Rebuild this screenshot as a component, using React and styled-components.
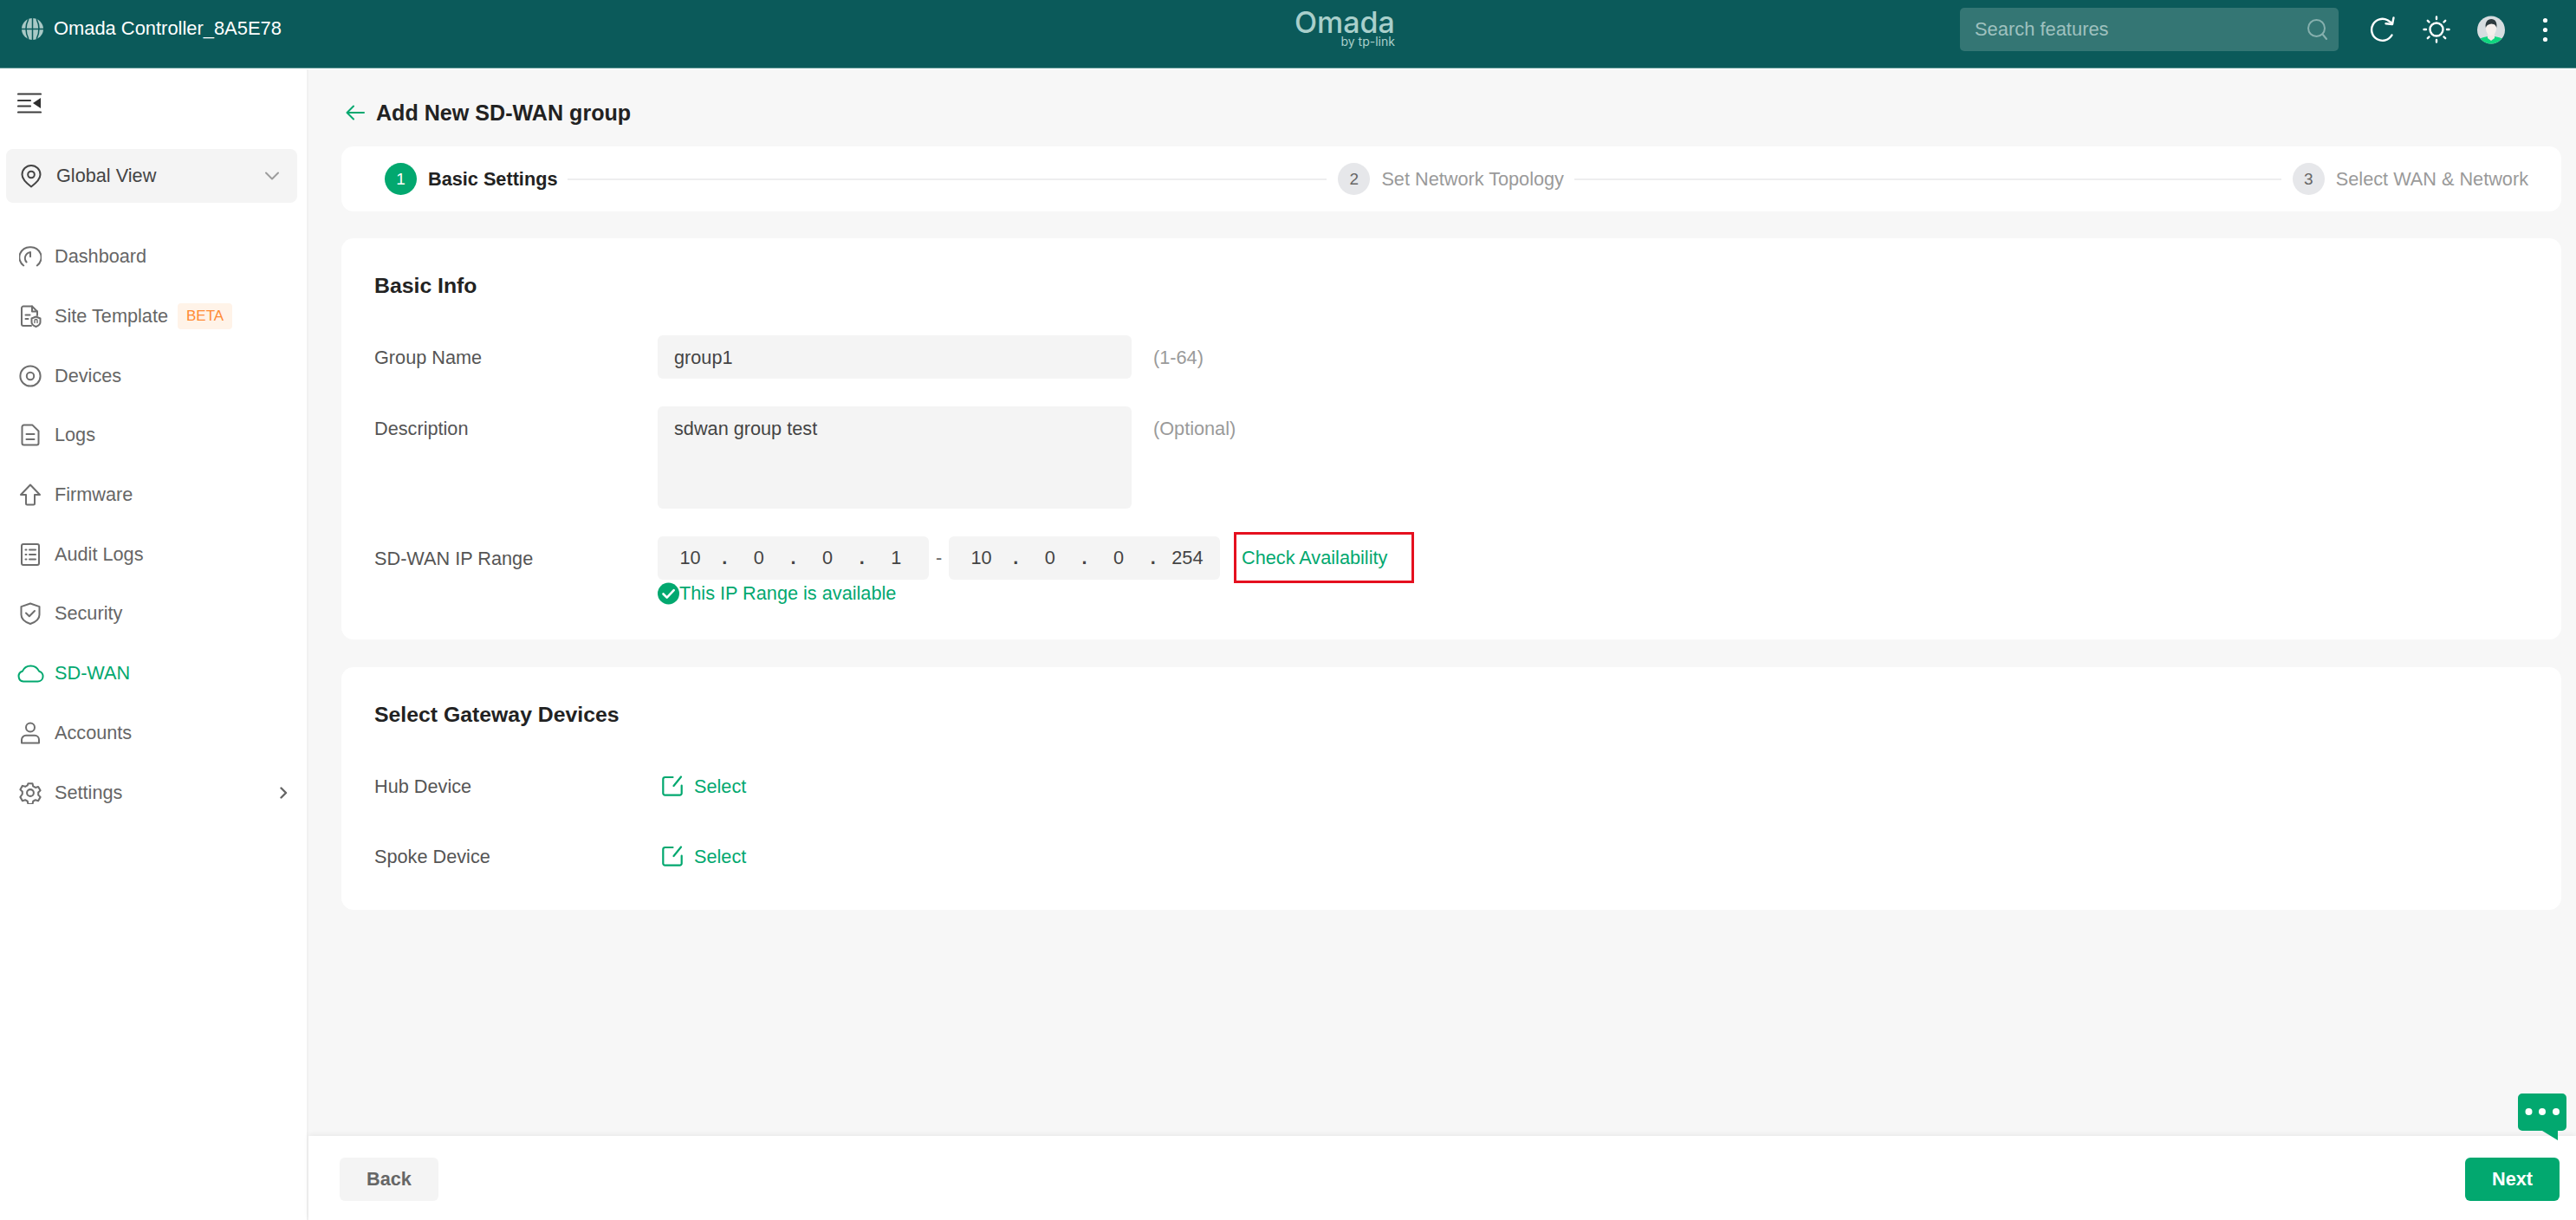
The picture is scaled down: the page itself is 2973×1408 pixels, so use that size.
import React from "react";
import styled, { createGlobalStyle } from "styled-components";

const GREEN = "#02a86f";
const TEXT_SIZE = "21.7px";

const Global = createGlobalStyle`
  html, body { margin: 0; padding: 0; height: 100%; }
  body { font-family: "Liberation Sans", Arial, sans-serif; color: #333; background: #fff; overflow: hidden; }
  #root { height: 100%; }
  * { box-sizing: border-box; }
`;

const Page = styled.div`
  position: relative;
  display: flex;
  flex-direction: column;
  width: 2973px;
  height: 1408px;
  overflow: hidden;
  font-size: ${TEXT_SIZE};
`;

/* ---------- Top bar ---------- */
const TopBar = styled.header`
  flex: none;
  display: grid;
  grid-template-columns: 1469px auto 1fr;
  align-items: center;
  height: 80px;
  padding: 0 0 2px 25px;
  background: #0b5a5a;
  border-bottom: 1px solid #fff;
  box-shadow: inset 0 -1px 0 #5d9593;
`;
const Brand = styled.div`
  display: flex;
  align-items: center;
  gap: 12px;
  color: #fff;
  font-size: 21.9px;
  margin-top: -11px;
`;
const Logo = styled.div`
  align-self: start;
  display: flex;
  flex-direction: column;
  align-items: flex-end;
  padding-top: 11px;
  color: #a9cfcb;
`;
const LogoName = styled.span`
  font-family: Inter, "Noto Sans", sans-serif;
  font-size: 34px;
  font-weight: 500;
  line-height: 30px;
  height: 30px;
`;
const LogoSub = styled.span`
  font-family: Inter, "Noto Sans", sans-serif;
  font-size: 14px;
  line-height: 14px;
  height: 14px;
`;
const TopTools = styled.div`
  display: flex;
  align-items: center;
  justify-content: flex-end;
  margin-top: -9px;
  padding-right: 32px;
`;
const SearchBox = styled.div`
  display: flex;
  align-items: center;
  justify-content: space-between;
  width: 437px;
  height: 50px;
  padding: 0 12px 0 17px;
  margin-right: 36px;
  border-radius: 5px;
  background: #347674;
  color: #9fc1bf;
  font-size: 21.9px;
`;
const ToolIcon = styled.span`
  display: flex;
  margin-right: ${(p) => p.$gap}px;
`;

/* ---------- Shell ---------- */
const Body = styled.div`
  flex: 1;
  min-height: 0;
  display: flex;
`;
const Sidebar = styled.aside`
  flex: none;
  width: 356px;
  padding: 27px 11px 0 7px;
  border-right: 2px solid #f1f1f1;
  background: #fff;
  color: #666;
`;
const Collapse = styled.div`
  display: flex;
  height: 24px;
  margin-left: 13px;
`;
const SiteSelect = styled.div`
  display: flex;
  align-items: center;
  height: 62px;
  margin-top: 41px;
  padding: 0 21px 0 17px;
  border-radius: 8px;
  background: #f4f4f4;
  color: #444;
`;
const SiteName = styled.span`
  flex: 1;
  margin-left: 17px;
`;
const Nav = styled.nav`
  display: flex;
  flex-direction: column;
  margin-top: 28px;
`;
const NavItem = styled.div`
  display: flex;
  align-items: center;
  height: 68.7px;
  padding-left: 15px;
  color: ${(p) => (p.$active ? GREEN : "#666")};
`;
const NavIcon = styled.span`
  flex: none;
  display: flex;
  justify-content: center;
  width: 26px;
  margin-right: 15px;
  color: ${(p) => (p.$active ? GREEN : "#6e6e6e")};
  svg { flex: none; }
`;
const Beta = styled.span`
  display: inline-flex;
  align-items: center;
  height: 30px;
  margin-left: 11px;
  padding: 0 10px;
  border-radius: 4px;
  background: #fff3e8;
  color: #ff8a33;
  font-size: 17px;
`;
const NavArrow = styled.span`
  display: flex;
  margin-left: auto;
  margin-right: 11px;
`;

/* ---------- Main ---------- */
const Main = styled.main`
  flex: 1;
  min-width: 0;
  display: flex;
  flex-direction: column;
  background: #f7f7f7;
`;
const Content = styled.div`
  flex: 1;
  padding: 30px 17px 0 38px;
`;
const PageHead = styled.div`
  display: flex;
  align-items: center;
  gap: 13px;
  height: 40px;
  margin-left: 5px;
`;
const PageTitle = styled.h1`
  margin: 0;
  font-size: 25.1px;
  font-weight: 700;
  color: #222;
`;
const Stepper = styled.div`
  display: flex;
  align-items: center;
  height: 75px;
  margin-top: 19px;
  padding: 0 38px 0 50px;
  border-radius: 14px;
  background: #fff;
`;
const Step = styled.div`
  flex: none;
  display: flex;
  align-items: center;
  gap: 13px;
  color: ${(p) => (p.$on ? "#222" : "#9a9a9a")};
  font-weight: ${(p) => (p.$on ? 700 : 400)};
`;
const StepNum = styled.span`
  display: flex;
  align-items: center;
  justify-content: center;
  width: 37px;
  height: 37px;
  border-radius: 50%;
  background: ${(p) => (p.$on ? GREEN : "#e6e7ea")};
  color: ${(p) => (p.$on ? "#fff" : "#666")};
  font-size: 19px;
  font-weight: 400;
`;
const StepLine = styled.span`
  flex: ${(p) => p.$grow} 1 0;
  height: 2px;
  margin: 0 13px 0 12px;
  background: #eeeeef;
`;
const Card = styled.section`
  margin-top: ${(p) => p.$top}px;
  padding: 40px 38px 37px;
  border-radius: 14px;
  background: #fff;
`;
const CardTitle = styled.h2`
  margin: 0 0 42px;
  height: 30px;
  font-size: 24.8px;
  line-height: 30px;
  font-weight: 700;
  color: #222;
`;
const Rows = styled.div`
  display: flex;
  flex-direction: column;
  gap: ${(p) => p.$gap}px;
`;
const Row = styled.div`
  display: flex;
  align-items: flex-start;
  line-height: 51px;
`;
const Label = styled.div`
  flex: none;
  width: 327px;
  height: 50px;
  color: #555;
`;
const FieldBox = styled.div`
  flex: none;
  width: 547px;
  height: ${(p) => p.$h}px;
  padding: 0 19px;
  border-radius: 6px;
  background: #f4f4f4;
  color: #444;
`;
const Hint = styled.span`
  height: 50px;
  margin-left: 25px;
  color: #9a9a9a;
`;
const IpColumn = styled.div`
  display: flex;
  flex-direction: column;
`;
const IpLine = styled.div`
  display: flex;
  align-items: center;
  line-height: normal;
`;
const IpBox = styled.div`
  display: flex;
  align-items: center;
  width: 313px;
  height: 50px;
  padding: 0 4px;
  border-radius: 6px;
  background: #f4f4f4;
  color: #444;
`;
const IpCell = styled.span`
  flex: 1;
  text-align: center;
`;
const IpDot = styled.span`
  flex: none;
  width: 12px;
  text-align: center;
  font-weight: 700;
`;
const Dash = styled.span`
  width: 23px;
  text-align: center;
  color: #666;
`;
const CheckButton = styled.div`
  display: flex;
  align-items: center;
  width: 208px;
  height: 59px;
  margin: -5px 0 -4px 16px;
  padding-left: 6px;
  border: 3px solid #e5101f;
  color: ${GREEN};
`;
const Available = styled.div`
  display: flex;
  align-items: center;
  height: 29px;
  margin: 1px 0 2px;
  line-height: 29px;
  color: ${GREEN};
`;
const SelectLink = styled.div`
  display: flex;
  align-items: center;
  gap: 13px;
  height: 50px;
  margin-left: 5px;
  color: ${GREEN};
`;
const Footer = styled.footer`
  flex: none;
  display: flex;
  align-items: center;
  justify-content: space-between;
  height: 97px;
  padding: 2px 19px 0 36px;
  background: #fff;
  box-shadow: 0 -2px 6px rgba(0, 0, 0, 0.06);
`;
const Button = styled.div`
  display: flex;
  align-items: center;
  justify-content: center;
  width: ${(p) => (p.$primary ? 109 : 114)}px;
  height: 50px;
  border-radius: 6px;
  background: ${(p) => (p.$primary ? GREEN : "#f4f4f4")};
  color: ${(p) => (p.$primary ? "#fff" : "#666")};
  font-weight: 700;
`;
const ChatBubble = styled.div`
  position: absolute;
  right: 11px;
  bottom: 92px;
  display: flex;
`;

/* ---------- Drawn icons ---------- */
const Line = ({ w = 26, h = 26, vb = "0 0 26 26", sw = 2, children }) => (
  <svg width={w} height={h} viewBox={vb} fill="none" stroke="currentColor" strokeWidth={sw} strokeLinecap="round" strokeLinejoin="round">
    {children}
  </svg>
);

const icons = {
  dashboard: (
    <Line>
      <path d="M5.2 23.5A11.8 11.8 0 0 1 13 2.2a11.8 11.8 0 0 1 7.8 21.3" />
      <path d="M8.6 19.5A6.8 6.8 0 0 1 13 8.2" />
      <path d="M13 8.2v5" />
    </Line>
  ),
  template: (
    <Line>
      <path d="M14 24H5a2 2 0 0 1-2-2V3.5a2 2 0 0 1 2-2h10l6 6v4.5" />
      <path d="M15 1.5v6h6" />
      <path d="M7.5 11.5h5M7.5 16h3" />
      <path d="M19.5 13.5l5 2v4.5c0 2.5-2.5 4-5 5-2.5-1-5-2.5-5-5v-4.5z" />
      <path d="M18 20.5v-2.5a1.5 1.5 0 0 1 3 0v2.5" strokeWidth="1.4" />
    </Line>
  ),
  devices: (
    <Line>
      <circle cx="13" cy="13" r="11.6" />
      <circle cx="13" cy="13" r="4.2" />
    </Line>
  ),
  logs: (
    <Line>
      <path d="M15.5 1.6H5.5a2 2 0 0 0-2 2v19a2 2 0 0 0 2 2h15a2 2 0 0 0 2-2V8.5z" />
      <path d="M8.5 12h9M8.5 18h9" />
    </Line>
  ),
  firmware: (
    <Line>
      <path d="M13 1.5L24 13h-6v10a1.5 1.5 0 0 1-1.5 1.5h-7A1.5 1.5 0 0 1 8 23V13H2z" />
    </Line>
  ),
  audit: (
    <Line>
      <rect x="3" y="1" width="20" height="24" rx="2" />
      <path d="M7.5 7.5h1M12 7.5h7M7.5 13h1M12 13h7M7.5 18.5h1M12 18.5h7" />
    </Line>
  ),
  security: (
    <Line>
      <path d="M13 1.5l10.5 3.6v9.4c0 5-4.5 8.500-10.500 10.500C7 23 2.500 19.500 2.500 14.500V5.100z" />
      <path d="M8 12.500l3.800 3.800L18 10" />
    </Line>
  ),
  cloud: (
    <Line w={32} h={22} vb="0 0 32 22">
      <path d="M8 20.500h16.500a6 6 0 0 0 1.600-11.800A10.500 10.500 0 0 0 6.800 8.800 6 6 0 0 0 8 20.500z" />
    </Line>
  ),
  user: (
    <Line>
      <circle cx="13" cy="6.500" r="5" />
      <path d="M3 24.600v-3.800a5 5 0 0 1 5-5h10a5 5 0 0 1 5 5v3.800z" />
    </Line>
  ),
  gear: (
    <svg width="26" height="26" viewBox="0 0 24 24" fill="none" stroke="currentColor" strokeWidth="1.900" strokeLinecap="round" strokeLinejoin="round">
      <path d="M9.700 2h4.600l.700 3 2.400 1.400 3-.900 2.300 4-2.200 2.100v2.800l2.200 2.100-2.300 4-3-.900-2.400 1.400-.700 3H9.700l-.700-3-2.400-1.400-3 .900-2.300-4L3.500 13.400v-2.800L1.300 8.500l2.300-4 3 .900L9 4z" />
      <circle cx="12" cy="12" r="3.600" />
    </svg>
  ),
};

const CollapseIcon = () => (
  <svg width="28" height="24" viewBox="0 0 28 24">
    <g stroke="#3d3d3d" strokeWidth="2.200" strokeLinecap="round">
      <path d="M1 1.500h26M1 9h14M1 15.500h14M1 22.500h26" />
    </g>
    <path d="M27 6v12l-9-6z" fill="#2f2f2f" />
  </svg>
);
const PinIcon = () => (
  <Line w={24} h={27} vb="0 0 24 27">
    <path d="M12 25.500C6 21 1.500 16.500 1.500 11.500a10.500 10.500 0 0 1 21 0C22.500 16.500 18 21 12 25.500z" />
    <circle cx="12" cy="11.500" r="3.800" />
  </Line>
);
const ChevronDown = () => (
  <svg width="16" height="10" viewBox="0 0 16 10" fill="none" stroke="#9c9c9c" strokeWidth="2" strokeLinecap="round" strokeLinejoin="round">
    <path d="M1 1.500l7 7 7-7" />
  </svg>
);
const ChevronRight = () => (
  <svg width="9" height="14" viewBox="0 0 9 14" fill="none" stroke="#666" strokeWidth="2.400" strokeLinecap="round" strokeLinejoin="round">
    <path d="M1.500 1.500L7 7l-5.500 5.500" />
  </svg>
);
const GlobeIcon = () => (
  <svg width="25" height="25" viewBox="0 0 25 25">
    <circle cx="12.500" cy="12.500" r="12.500" fill="#a9c9c6" />
    <path d="M12.500 0v25M0 12.500h25M7.800 1.200c-3.500 7-3.500 15.600 0 22.600M17.200 1.200c3.500 7 3.500 15.600 0 22.600" fill="none" stroke="#0b5a5a" strokeWidth="1.500" />
  </svg>
);
const SearchIcon = () => (
  <svg width="25" height="26" viewBox="0 0 25 26" fill="none" stroke="#86b0ae" strokeWidth="2" strokeLinecap="round">
    <circle cx="11.500" cy="11.500" r="9.500" />
    <path d="M18.500 18.500l4.500 5.500" />
  </svg>
);
const RefreshIcon = () => (
  <svg width="30" height="30" viewBox="0 0 30 30" fill="none" stroke="#fff" strokeWidth="2.400" strokeLinecap="round" strokeLinejoin="round">
    <path d="M25.500 21.500A12.500 12.500 0 1 1 20.500 4.300L26 8" />
    <path d="M27.500 1.500L26 9l-7.500-.8" />
  </svg>
);
const SunIcon = () => (
  <svg width="32" height="32" viewBox="0 0 32 32" fill="none" stroke="#fff" strokeWidth="2.400" strokeLinecap="round">
    <circle cx="16" cy="16" r="7.500" />
    <path d="M16 1.500v2.500M16 28v2.500M1.500 16h2.500M28 16h2.500M5.800 5.800l1.700 1.700M24.500 24.500l1.700 1.700M5.800 26.200l1.700-1.700M24.500 7.500l1.700-1.700" />
  </svg>
);
const Avatar = () => (
  <svg width="32" height="33" viewBox="0 0 32 33">
    <defs>
      <clipPath id="avatar-clip"><circle cx="16" cy="16.500" r="16" /></clipPath>
    </defs>
    <g clipPath="url(#avatar-clip)">
      <rect width="32" height="33" fill="#d7dde0" />
      <path d="M-2 35c0-8 8-11 18-11s18 3 18 11z" fill="#10d67f" />
      <path d="M12 20h8v6l-4 3-4-3z" fill="#f3e9e6" />
      <ellipse cx="16" cy="15" rx="6" ry="8" fill="#f6efec" />
      <path d="M9.800 14c-1-6 2-10 6.500-10s7 4 6 10c-1-3-2-4-6-4.500-3 .300-5.500 1.500-6.500 4.500z" fill="#2d3a3e" />
    </g>
  </svg>
);
const MoreIcon = () => (
  <svg width="7" height="29" viewBox="0 0 7 29" fill="#fff">
    <circle cx="3.500" cy="3.500" r="2.600" />
    <circle cx="3.500" cy="14.500" r="2.600" />
    <circle cx="3.500" cy="25.500" r="2.600" />
  </svg>
);
const BackArrow = () => (
  <svg width="22" height="18" viewBox="0 0 22 18" fill="none" stroke={GREEN} strokeWidth="2" strokeLinecap="round" strokeLinejoin="round">
    <path d="M21 9H2M9 1.500L1.500 9 9 16.500" />
  </svg>
);
const CheckCircle = () => (
  <svg width="25" height="26" viewBox="0 0 25 26">
    <circle cx="12.500" cy="13" r="12.500" fill={GREEN} />
    <path d="M6.500 13.500l4.200 4.200 8-8.500" fill="none" stroke="#fff" strokeWidth="2.600" strokeLinecap="round" strokeLinejoin="round" />
  </svg>
);
const EditIcon = () => (
  <svg width="24" height="24" viewBox="0 0 24 24" fill="none" stroke={GREEN} strokeWidth="2.200" strokeLinecap="round" strokeLinejoin="round">
    <path d="M12.500 2H3.500A2.200 2.200 0 0 0 1.300 4.200v16.300a2.200 2.200 0 0 0 2.200 2.200h17a2.200 2.200 0 0 0 2.200-2.200V11.500" />
    <path d="M22 1.500l-8.500 10.500" />
  </svg>
);
const ChatIcon = () => (
  <svg width="56" height="54" viewBox="0 0 56 54">
    <path d="M5 0h46a5 5 0 0 1 5 5v33a5 5 0 0 1-5 5H46v11L28 43H5a5 5 0 0 1-5-5V5a5 5 0 0 1 5-5z" fill={GREEN} />
    <circle cx="12.500" cy="21" r="4" fill="#fff" />
    <circle cx="28" cy="21" r="4" fill="#fff" />
    <circle cx="44" cy="21" r="4" fill="#fff" />
  </svg>
);

const navItems = [
  { name: "Dashboard", icon: "dashboard" },
  { name: "Site Template", icon: "template", beta: true },
  { name: "Devices", icon: "devices" },
  { name: "Logs", icon: "logs" },
  { name: "Firmware", icon: "firmware" },
  { name: "Audit Logs", icon: "audit" },
  { name: "Security", icon: "security" },
  { name: "SD-WAN", icon: "cloud", active: true },
  { name: "Accounts", icon: "user" },
  { name: "Settings", icon: "gear", more: true },
];

const IpField = ({ parts }) => (
  <IpBox>
    {parts.map((part, i) => (
      <React.Fragment key={i}>
        {i > 0 && <IpDot>.</IpDot>}
        <IpCell>{part}</IpCell>
      </React.Fragment>
    ))}
  </IpBox>
);

export default function App() {
  return (
    <Page>
      <Global />
      <TopBar>
        <Brand>
          <GlobeIcon />
          <span>Omada Controller_8A5E78</span>
        </Brand>
        <Logo>
          <LogoName>Omada</LogoName>
          <LogoSub>by tp-link</LogoSub>
        </Logo>
        <TopTools>
          <SearchBox>
            <span>Search features</span>
            <SearchIcon />
          </SearchBox>
          <ToolIcon $gap={31}><RefreshIcon /></ToolIcon>
          <ToolIcon $gap={31}><SunIcon /></ToolIcon>
          <ToolIcon $gap={43}><Avatar /></ToolIcon>
          <ToolIcon $gap={0}><MoreIcon /></ToolIcon>
        </TopTools>
      </TopBar>
      <Body>
        <Sidebar>
          <Collapse><CollapseIcon /></Collapse>
          <SiteSelect>
            <PinIcon />
            <SiteName>Global View</SiteName>
            <ChevronDown />
          </SiteSelect>
          <Nav>
            {navItems.map((item) => (
              <NavItem key={item.name} $active={item.active}>
                <NavIcon $active={item.active}>{icons[item.icon]}</NavIcon>
                <span>{item.name}</span>
                {item.beta && <Beta>BETA</Beta>}
                {item.more && <NavArrow><ChevronRight /></NavArrow>}
              </NavItem>
            ))}
          </Nav>
        </Sidebar>
        <Main>
          <Content>
            <PageHead>
              <BackArrow />
              <PageTitle>Add New SD-WAN group</PageTitle>
            </PageHead>
            <Stepper>
              <Step $on>
                <StepNum $on>1</StepNum>
                <span>Basic Settings</span>
              </Step>
              <StepLine $grow={875} />
              <Step>
                <StepNum>2</StepNum>
                <span>Set Network Topology</span>
              </Step>
              <StepLine $grow={815} />
              <Step>
                <StepNum>3</StepNum>
                <span>Select WAN &amp; Network</span>
              </Step>
            </Stepper>
            <Card $top={31}>
              <CardTitle>Basic Info</CardTitle>
              <Rows $gap={32}>
                <Row>
                  <Label>Group Name</Label>
                  <FieldBox $h={50}>group1</FieldBox>
                  <Hint>(1-64)</Hint>
                </Row>
                <Row>
                  <Label>Description</Label>
                  <FieldBox $h={118}>sdwan group test</FieldBox>
                  <Hint>(Optional)</Hint>
                </Row>
                <Row>
                  <Label>SD-WAN IP Range</Label>
                  <IpColumn>
                    <IpLine>
                      <IpField parts={["10", "0", "0", "1"]} />
                      <Dash>-</Dash>
                      <IpField parts={["10", "0", "0", "254"]} />
                      <CheckButton>Check Availability</CheckButton>
                    </IpLine>
                    <Available>
                      <CheckCircle />
                      <span>This IP Range is available</span>
                    </Available>
                  </IpColumn>
                </Row>
              </Rows>
            </Card>
            <Card $top={32}>
              <CardTitle>Select Gateway Devices</CardTitle>
              <Rows $gap={31}>
                <Row>
                  <Label>Hub Device</Label>
                  <SelectLink><EditIcon /><span>Select</span></SelectLink>
                </Row>
                <Row>
                  <Label>Spoke Device</Label>
                  <SelectLink><EditIcon /><span>Select</span></SelectLink>
                </Row>
              </Rows>
            </Card>
          </Content>
          <Footer>
            <Button>Back</Button>
            <Button $primary>Next</Button>
          </Footer>
        </Main>
      </Body>
      <ChatBubble><ChatIcon /></ChatBubble>
    </Page>
  );
}
